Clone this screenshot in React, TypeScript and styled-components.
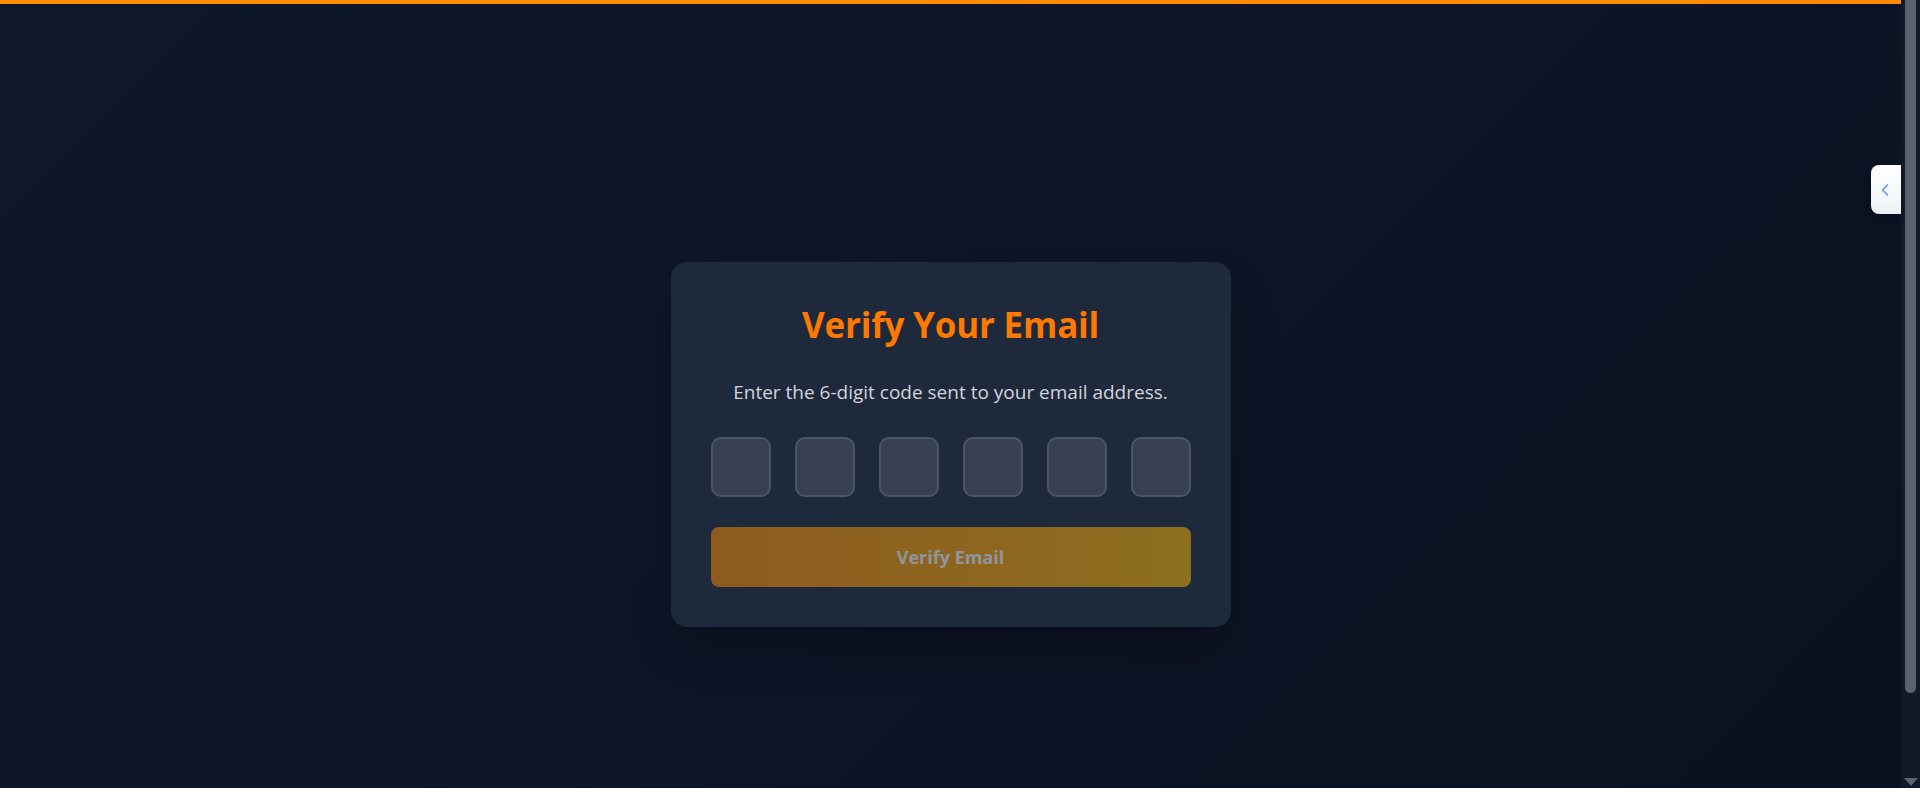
import React, { useRef, useState } from 'react';
import styled, { createGlobalStyle } from 'styled-components';
import { ChevronLeft } from 'lucide-react';

const GlobalStyle = createGlobalStyle`
	html, body {
		margin: 0;
		padding: 0;
		background: #ffffff;
		overflow: hidden;
	}
	* {
		box-sizing: border-box;
	}
`;

const Viewport = styled.div`
	position: relative;
	height: 788px;
	width: 100%;
	display: flex;
`;

const Frame = styled.div`
	flex: 1;
	height: 100%;
	overflow: hidden;
	background: linear-gradient(135deg, #0f172a 0%, #0d1527 50%, #0b1120 100%);
	font-family: 'Open Sans', 'Noto Sans', sans-serif;
`;

const ScrollRail = styled.div`
	width: 19px;
	height: 100%;
	background: #111827;
	display: flex;
	flex-direction: column;
	justify-content: space-between;
	align-items: center;
`;

const ScrollThumb = styled.div`
	width: 11px;
	height: 693px;
	background: #5b6170;
	border-radius: 0 0 6px 6px;
`;

const ScrollArrow = styled.div`
	width: 0;
	height: 0;
	margin-bottom: 2px;
	border-left: 7px solid transparent;
	border-right: 7px solid transparent;
	border-top: 8px solid #5b6170;
`;

const TopBar = styled.div`
	height: 4px;
	background: #ff8c00;
`;

const Main = styled.main`
	height: 880px;
	display: flex;
	align-items: center;
	justify-content: center;
`;

const Card = styled.div`
	width: 560px;
	padding: 40px;
	background: #1e293b;
	border-radius: 16px;
	box-shadow: 0 25px 50px -12px rgba(0, 0, 0, 0.35);
	display: flex;
	flex-direction: column;
	align-items: center;
`;

const Title = styled.h1`
	margin: 3px 0 33px;
	font-size: 35px;
	line-height: 40px;
	font-weight: 700;
	color: #ff7800;
	text-align: center;
	letter-spacing: -0.2px;
`;

const Subtitle = styled.p`
	margin: 0 0 31px;
	font-size: 19px;
	line-height: 28px;
	color: #d1d5db;
	text-align: center;
`;

const CodeRow = styled.div`
	display: flex;
	gap: 24px;
	margin-bottom: 30px;
`;

const CodeInput = styled.input`
	width: 60px;
	height: 60px;
	border: 2px solid #4b5563;
	border-radius: 10px;
	background: #374151;
	color: #ffffff;
	font-family: inherit;
	font-size: 24px;
	font-weight: 700;
	text-align: center;
	outline: none;

	&:focus {
		border-color: #ff8c00;
	}
`;

const VerifyButton = styled.button`
	width: 100%;
	height: 60px;
	border: none;
	border-radius: 8px;
	background: linear-gradient(to right, #ff8b03, #fcb705);
	color: #ffffff;
	font-family: inherit;
	font-size: 18px;
	font-weight: 700;
	cursor: pointer;

	&:disabled {
		opacity: 0.5;
		cursor: not-allowed;
	}
`;

const SideTab = styled.button`
	position: absolute;
	top: 165px;
	right: 19px;
	width: 30px;
	height: 49px;
	border: none;
	border-radius: 8px 0 0 8px;
	background: linear-gradient(180deg, #ffffff 0%, #eef2f8 100%);
	box-shadow: -2px 2px 8px rgba(0, 0, 0, 0.25);
	display: flex;
	align-items: center;
	justify-content: center;
	padding: 0 2px 0 0;
	color: #5b9cf0;
	cursor: pointer;
`;

export default function App() {
	const [code, setCode] = useState<string[]>(['', '', '', '', '', '']);
	const refs = useRef<(HTMLInputElement | null)[]>([]);

	const handleChange = (i: number, v: string) => {
		const digit = v.replace(/\D/g, '').slice(-1);
		setCode((current) => {
			const next = [...current];
			next[i] = digit;
			return next;
		});
		if (digit && i < 5) refs.current[i + 1]?.focus();
	};

	const complete = code.every((c) => c !== '');

	return (
		<>
			<GlobalStyle />
			<Viewport>
				<Frame>
					<TopBar />
					<Main>
						<Card>
							<Title>Verify Your Email</Title>
							<Subtitle>Enter the 6-digit code sent to your email address.</Subtitle>
							<CodeRow>
								{code.map((c, i) => (
									<CodeInput
										key={i}
										ref={(el) => {
											refs.current[i] = el;
										}}
										type='text'
										inputMode='numeric'
										maxLength={1}
										value={c}
										onChange={(e) => handleChange(i, e.target.value)}
									/>
								))}
							</CodeRow>
							<VerifyButton disabled={!complete}>Verify Email</VerifyButton>
						</Card>
					</Main>
				</Frame>
				<ScrollRail>
					<ScrollThumb />
					<ScrollArrow />
				</ScrollRail>
				<SideTab aria-label='Open panel'>
					<ChevronLeft size={20} strokeWidth={2} />
				</SideTab>
			</Viewport>
		</>
	);
}
